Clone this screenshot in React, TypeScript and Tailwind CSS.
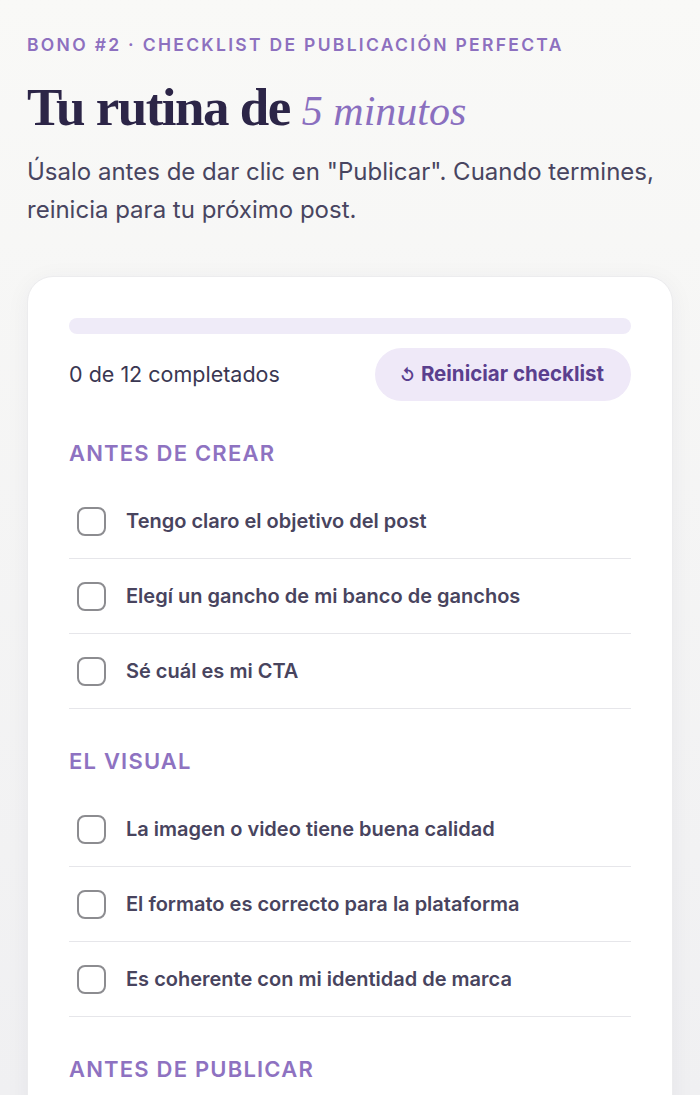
import React, { useState } from "react";

type Section = { title: string; items: string[] };

const sections: Section[] = [
  {
    title: "Antes de crear",
    items: [
      "Tengo claro el objetivo del post",
      "Elegí un gancho de mi banco de ganchos",
      "Sé cuál es mi CTA",
    ],
  },
  {
    title: "El visual",
    items: [
      "La imagen o video tiene buena calidad",
      "El formato es correcto para la plataforma",
      "Es coherente con mi identidad de marca",
    ],
  },
  {
    title: "Antes de publicar",
    items: [],
  },
];

const sans = { fontFamily: "Inter, 'Noto Sans', sans-serif" };
const serif = { fontFamily: "'Liberation Serif', 'DejaVu Serif', serif" };

export default function App() {
  const [done, setDone] = useState<Record<string, boolean>>({});
  const total = 12;
  const count = Object.values(done).filter(Boolean).length;

  return (
    <div
      className="h-[1095px] overflow-hidden bg-gradient-to-b from-[#f9f9f7] to-[#f0f0f2] px-[27px] pt-[33px]"
      style={sans}
    >
      <p className="text-[17.5px] font-semibold tracking-[2.3px] text-[#8d70bf] uppercase leading-[24px]">
        Bono #2 · Checklist de publicación perfecta
      </p>
      <h1 className="mt-[20px] flex items-baseline gap-[12px] leading-[60px] text-[#2c2547]">
        <span className="text-[53px] font-bold tracking-[-1.5px]" style={serif}>
          Tu rutina de
        </span>
        <span className="text-[42px] italic text-[#8a6fbf]" style={serif}>
          5 minutos
        </span>
      </h1>
      <p className="mt-[12px] text-[24px] leading-[38px] text-[#484560]">
        Úsalo antes de dar clic en "Publicar". Cuando termines, reinicia para tu próximo post.
      </p>

      <div className="mt-[47px] rounded-[26px] border border-[#ececee] bg-white px-[41px] pt-[41px] pb-10 shadow-[0_4px_24px_rgba(40,30,70,0.05)]">
        <div className="h-[16px] w-full rounded-full bg-[#efebf8]">
          <div
            className="h-full rounded-full bg-[#8a6fbf]"
            style={{ width: `${(count / total) * 100}%` }}
          />
        </div>
        <div className="mt-[14px] flex items-center justify-between">
          <span className="text-[21.5px] text-[#3a3752]">
            {count} de {total} completados
          </span>
          <button
            onClick={() => setDone({})}
            className="flex h-[53px] items-center gap-[6px] rounded-full bg-[#efe9f8] pl-[25px] pr-[27px] text-[20.5px] font-bold text-[#5a3f8e]"
          >
            <span className="text-[16px] font-bold">↺</span>
            Reiniciar checklist
          </button>
        </div>

        {sections.map((s) => (
          <div key={s.title}>
            <h2 className="mt-[37px] text-[22px] font-semibold uppercase tracking-[1.2px] leading-[30px] text-[#8e72c1]">
              {s.title}
            </h2>
            {s.items.length > 0 && (
              <ul className="mt-[16px]">
                {s.items.map((it) => {
                  const key = s.title + it;
                  const on = !!done[key];
                  return (
                    <li
                      key={key}
                      onClick={() => setDone({ ...done, [key]: !on })}
                      className="flex h-[75px] cursor-pointer items-center gap-[20px] border-b border-[#e6e6ea] pl-[8px]"
                    >
                      <span
                        className={
                          on
                            ? "h-[29px] w-[29px] shrink-0 rounded-[8px] border-2 border-[#8a6fbf] bg-[#8a6fbf]"
                            : "h-[29px] w-[29px] shrink-0 rounded-[8px] border-2 border-[#8c8c90] bg-white"
                        }
                      />
                      <span className="text-[20px] font-semibold text-[#48445e]">{it}</span>
                    </li>
                  );
                })}
              </ul>
            )}
          </div>
        ))}
      </div>
    </div>
  );
}
